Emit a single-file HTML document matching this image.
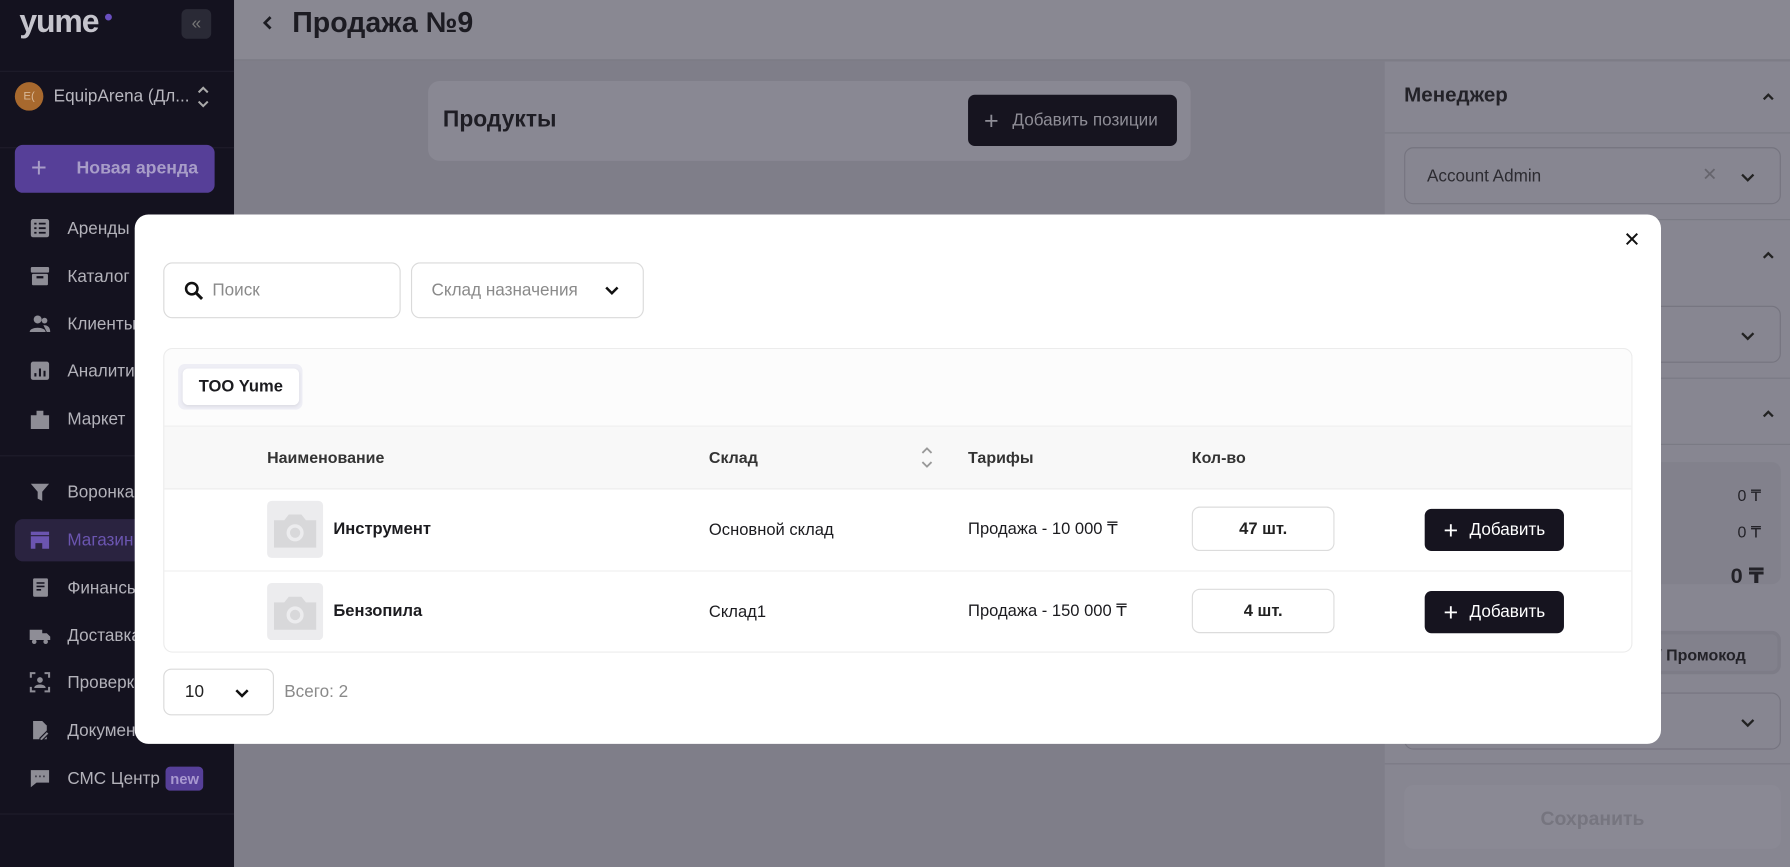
<!DOCTYPE html>
<html><head><meta charset="utf-8">
<style>
*{box-sizing:border-box;margin:0;padding:0}
html,body{width:1790px;height:842px;overflow:hidden;background:#7f7e89}
body{font-family:"Liberation Sans","DejaVu Sans",sans-serif}
#w{position:absolute;left:0;top:0;width:1568px;height:760px;transform:scale(1.14158,1.1409);transform-origin:0 0;background:#7f7e89}
.a{position:absolute}
.sb{left:0;top:0;width:205px;height:760px;background:#14121f}
.mi{position:absolute;left:25px;height:30px;display:flex;align-items:center;color:#b3b2ba;font-size:15px}
.mi svg{width:20px;height:20px;margin-right:14px}
.div{position:absolute;height:1px;background:#1f1d2b;left:0;width:205px}
.rdiv{position:absolute;left:1213px;width:355px;height:1px;background:#7a7984}
.chev{position:absolute;width:16px;height:16px}
.cell{position:absolute;font-size:14.5px;color:#1b1b1f}
.qty{position:absolute;left:1044px;width:125px;height:39px;border:1px solid #dcdcdc;border-radius:7px;display:flex;align-items:center;justify-content:center;font-size:14.5px;font-weight:bold;color:#222}
.btn{position:absolute;left:1248px;width:122px;height:37px;background:#16141f;border-radius:6px;color:#fff;font-size:15px;display:flex;align-items:center;justify-content:center}
.thumb{position:absolute;left:234px;width:49px;height:50px;background:#ececee;border-radius:4px}
</style></head><body><div id="w">
<div class="a" style="left:205px;top:0;width:1363px;height:53px;background:#898892;border-bottom:1px solid #7a7984"></div>
<svg class="a" style="left:228px;top:12px" width="14" height="16" viewBox="0 0 14 16"><path d="M9 3 L4 8 L9 13" stroke="#1c1c22" stroke-width="2.4" fill="none"/></svg>
<div class="a" style="left:256px;top:6px;font-size:25px;font-weight:bold;color:#1c1b22">Продажа №9</div>
<div class="a" style="left:375px;top:71px;width:668px;height:70px;background:#898893;border-radius:10px"></div>
<div class="a" style="left:388px;top:94px;font-size:20px;font-weight:bold;color:#1e1d24">Продукты</div>
<div class="a" style="left:848px;top:83px;width:183px;height:45px;background:#16141f;border-radius:6px;color:#8e8d96;font-size:15px;display:flex;align-items:center;padding-left:14px"><span style="font-size:22px;margin-right:12px;font-weight:300">+</span>Добавить позиции</div>
<div class="a" style="left:1213px;top:54px;width:355px;height:706px;background:#878691"></div>
<div class="a" style="left:1230px;top:73px;font-size:18px;font-weight:bold;color:#232228">Менеджер</div>
<svg class="chev" style="left:1541px;top:77px" viewBox="0 0 16 16"><path d="M4 10 L8 6 L12 10" stroke="#222" stroke-width="2" fill="none"/></svg>
<div class="rdiv" style="top:116px"></div>
<div class="a" style="left:1230px;top:129px;width:330px;height:50px;border:1px solid #75747f;border-radius:8px"></div>
<div class="a" style="left:1250px;top:146px;font-size:15px;color:#2c2b31">Account Admin</div>
<div class="a" style="left:1491px;top:143px;font-size:16px;color:#66656d">✕</div>
<svg class="chev" style="left:1523px;top:147px" viewBox="0 0 16 16"><path d="M3 6 L8 11 L13 6" stroke="#222" stroke-width="2" fill="none"/></svg>
<div class="rdiv" style="top:192px"></div>
<svg class="chev" style="left:1541px;top:216px" viewBox="0 0 16 16"><path d="M4 10 L8 6 L12 10" stroke="#222" stroke-width="2" fill="none"/></svg>
<div class="a" style="left:1230px;top:268px;width:330px;height:50px;border:1px solid #75747f;border-radius:8px"></div>
<svg class="chev" style="left:1523px;top:286px" viewBox="0 0 16 16"><path d="M3 6 L8 11 L13 6" stroke="#222" stroke-width="2" fill="none"/></svg>
<div class="rdiv" style="top:331px"></div>
<svg class="chev" style="left:1541px;top:355px" viewBox="0 0 16 16"><path d="M4 10 L8 6 L12 10" stroke="#222" stroke-width="2" fill="none"/></svg>
<div class="rdiv" style="top:389px"></div>
<div class="a" style="left:1230px;top:405px;width:330px;height:107px;background:#82818c;border-radius:8px"></div>
<div class="a" style="left:1522px;top:426px;font-size:14px;color:#232228">0 ₸</div>
<div class="a" style="left:1522px;top:458px;font-size:14px;color:#232228">0 ₸</div>
<div class="a" style="left:1516px;top:494px;font-size:19px;font-weight:bold;color:#232228">0 ₸</div>
<div class="a" style="left:1230px;top:553px;width:330px;height:38px;background:#82818c;border-radius:8px;border:3px solid #7d7c87"></div>
<div class="a" style="left:1440px;top:566px;font-size:14px;font-weight:bold;color:#232228">а / Промокод</div>
<div class="a" style="left:1230px;top:607px;width:330px;height:50px;border:1px solid #75747f;border-radius:8px"></div>
<svg class="chev" style="left:1523px;top:625px" viewBox="0 0 16 16"><path d="M3 6 L8 11 L13 6" stroke="#222" stroke-width="2" fill="none"/></svg>
<div class="rdiv" style="top:669px"></div>
<div class="a" style="left:1230px;top:688px;width:330px;height:56px;background:#8a8994;border-radius:8px;color:#76757f;font-size:17px;font-weight:bold;text-align:center;line-height:60px">Сохранить</div>
<div class="a sb"></div>
<div class="a" style="left:17px;top:3px;font-size:28px;font-weight:bold;color:#c5c4cc;letter-spacing:-1px">yume</div>
<div class="a" style="left:92px;top:12px;width:6px;height:6px;border-radius:50%;background:#6a4fc0"></div>
<div class="a" style="left:159px;top:8px;width:26px;height:26px;background:#2a2a36;border-radius:5px;color:#777;font-size:15px;text-align:center;line-height:25px">«</div>
<div class="div" style="top:62px"></div>
<div class="a" style="left:13px;top:72px;width:25px;height:25px;border-radius:50%;background:#a8692e;color:#d8b898;font-size:10px;text-align:center;line-height:25px">E(</div>
<div class="a" style="left:47px;top:76px;font-size:15px;color:#b8b7bf">EquipArena (Дл...</div>
<svg class="a" style="left:171px;top:74px" width="14" height="22" viewBox="0 0 14 22"><path d="M3 7 L7 3 L11 7 M3 15 L7 19 L11 15" stroke="#aaa" stroke-width="1.8" fill="none"/></svg>
<div class="div" style="top:129px"></div>
<div class="a" style="left:13px;top:127px;width:175px;height:42px;background:#563f98;border-radius:7px;color:#a89dc8;font-size:15.5px;font-weight:bold;display:flex;align-items:center"><span style="font-size:24px;font-weight:300;margin:0 26px 0 14px">+</span>Новая аренда</div>
<div class="mi" style="top:185px"><svg viewBox="0 0 20 20"><rect x="2" y="2" width="16" height="16" rx="2" fill="#8e8d96"/><path d="M5 6h2M9 6h6M5 10h2M9 10h6M5 14h2M9 14h6" stroke="#14121f" stroke-width="1.6"/></svg>Аренды</div>
<div class="mi" style="top:227px"><svg viewBox="0 0 20 20"><rect x="2" y="2" width="16" height="5" rx="1" fill="#8e8d96"/><rect x="3" y="8" width="14" height="10" rx="1" fill="#8e8d96"/><rect x="7" y="10" width="6" height="2" fill="#14121f"/></svg>Каталог</div>
<div class="mi" style="top:269px"><svg viewBox="0 0 20 20"><circle cx="8" cy="6" r="3.5" fill="#8e8d96"/><circle cx="14" cy="7" r="2.5" fill="#8e8d96"/><path d="M1 17c0-5 14-5 14 0z M13 11c4 0 6 2 6 6h-3z" fill="#8e8d96"/></svg>Клиенты</div>
<div class="mi" style="top:310px"><svg viewBox="0 0 20 20"><rect x="2" y="2" width="16" height="16" rx="2" fill="#8e8d96"/><path d="M6 15v-3M10 15v-7M14 15v-5" stroke="#14121f" stroke-width="1.8"/></svg>Аналитика</div>
<div class="mi" style="top:352px"><svg viewBox="0 0 20 20"><path d="M7 3h6v4h5v12H2V7h5z" fill="#8e8d96"/></svg>Маркет</div>
<div class="div" style="top:399px"></div>
<div class="mi" style="top:416px"><svg viewBox="0 0 20 20"><path d="M2 3h16l-6 7v8l-4-2v-6z" fill="#8e8d96"/></svg>Воронка</div>
<div class="a" style="left:13px;top:455px;width:192px;height:37px;background:#2a2340;border-radius:7px 0 0 7px"></div>
<div class="mi" style="top:458px;color:#6b55b0"><svg viewBox="0 0 20 20"><rect x="2" y="3" width="16" height="3" fill="#6b55b0"/><path d="M2 7h16v11h-6v-5H6v5H2z" fill="#6b55b0"/></svg>Магазин</div>
<div class="mi" style="top:500px"><svg viewBox="0 0 20 20"><rect x="4" y="2" width="13" height="16" rx="1" fill="#8e8d96"/><path d="M7 6h7M7 9h7M7 12h4" stroke="#14121f" stroke-width="1.4"/></svg>Финансы</div>
<div class="mi" style="top:542px"><svg viewBox="0 0 20 20"><path d="M1 5h11v9H1zM12 8h4l3 3v3h-7z" fill="#8e8d96"/><circle cx="5" cy="15.5" r="2" fill="#8e8d96"/><circle cx="15" cy="15.5" r="2" fill="#8e8d96"/></svg>Доставка</div>
<div class="mi" style="top:583px"><svg viewBox="0 0 20 20"><path d="M2 6V2h4M14 2h4v4M18 14v4h-4M6 18H2v-4" stroke="#8e8d96" stroke-width="1.8" fill="none"/><circle cx="10" cy="8" r="2.5" fill="#8e8d96"/><path d="M5 15c0-4 10-4 10 0z" fill="#8e8d96"/></svg>Проверка</div>
<div class="mi" style="top:625px"><svg viewBox="0 0 20 20"><path d="M4 2h8l4 4v12H4z" fill="#8e8d96"/><path d="M10 17l6-6 2 2-6 6h-2z" fill="#8e8d96" stroke="#14121f"/></svg>Документы</div>
<div class="mi" style="top:667px"><svg viewBox="0 0 20 20"><path d="M2 3h16v11H7l-5 4z" fill="#8e8d96"/><path d="M6 8.5h1M9.5 8.5h1M13 8.5h1" stroke="#14121f" stroke-width="1.6"/></svg>СМС Центр<span style="margin-left:5px;background:#563f98;color:#a898d0;font-size:13px;font-weight:bold;padding:3px 4px;border-radius:4px">new</span></div>
<div class="div" style="top:713px"></div>
<div class="a" style="left:118px;top:188px;width:1337px;height:464px;background:#fff;border-radius:12px"></div>
<div class="a" style="left:1422px;top:200px;font-size:18px;font-weight:bold;color:#111">✕</div>
<div class="a" style="left:143px;top:230px;width:208px;height:49px;border:1px solid #dadada;border-radius:8px"></div>
<svg class="a" style="left:160px;top:245px" width="20" height="20" viewBox="0 0 20 20"><circle cx="8" cy="8" r="5" stroke="#111" stroke-width="2.2" fill="none"/><path d="M12 12l5 5" stroke="#111" stroke-width="2.6"/></svg>
<div class="a" style="left:186px;top:246px;font-size:15px;color:#8a8a8a">Поиск</div>
<div class="a" style="left:360px;top:230px;width:204px;height:49px;border:1px solid #dadada;border-radius:8px"></div>
<div class="a" style="left:378px;top:246px;font-size:15px;color:#8a8a8a">Склад назначения</div>
<svg class="chev" style="left:528px;top:246px" viewBox="0 0 16 16"><path d="M3 6 L8 11 L13 6" stroke="#111" stroke-width="2.2" fill="none"/></svg>
<div class="a" style="left:143px;top:305px;width:1287px;height:267px;border:1px solid #ececec;border-radius:8px;overflow:hidden">
 <div style="position:absolute;left:0;top:0;width:100%;height:68px;background:#fcfcfc;border-bottom:1px solid #ededed"></div>
 <div style="position:absolute;left:0;top:68px;width:100%;height:55px;background:#f8f8f8;border-bottom:1px solid #ececec"></div>
 <div style="position:absolute;left:0;top:194px;width:100%;height:1px;background:#efefef"></div>
</div>
<div class="a" style="left:156px;top:319px;width:109px;height:40px;background:#eeeef5;border-radius:6px"></div>
<div class="a" style="left:160px;top:323px;width:102px;height:32px;background:#fff;border-radius:5px;box-shadow:0 1px 3px rgba(0,0,0,.08);font-size:14.5px;font-weight:bold;color:#1b1b1f;text-align:center;line-height:32px">ТОО Yume</div>
<div class="cell" style="left:234px;top:393px;font-weight:bold;color:#333;font-size:14px">Наименование</div>
<div class="cell" style="left:621px;top:393px;font-weight:bold;color:#333;font-size:14px">Склад</div>
<svg class="a" style="left:806px;top:390px" width="12" height="22" viewBox="0 0 12 22"><path d="M2 7l4-4 4 4M2 15l4 4 4-4" stroke="#999" stroke-width="1.6" fill="none"/></svg>
<div class="cell" style="left:848px;top:393px;font-weight:bold;color:#333;font-size:14px">Тарифы</div>
<div class="cell" style="left:1044px;top:393px;font-weight:bold;color:#333;font-size:14px">Кол-во</div>
<div class="thumb" style="top:439px"></div>
<svg class="a" style="left:237px;top:447px" width="43" height="36" viewBox="0 0 43 36"><path d="M3 9h9l4-5h11l4 5h9v24H3z" fill="#d8d8da"/><circle cx="21.5" cy="20" r="6" stroke="#ececee" stroke-width="3" fill="none"/></svg>
<div class="cell" style="left:292px;top:456px;font-weight:bold">Инструмент</div>
<div class="cell" style="left:621px;top:457px">Основной склад</div>
<div class="cell" style="left:848px;top:456px">Продажа - 10 000 ₸</div>
<div class="qty" style="top:444px">47 шт.</div>
<div class="btn" style="top:446px"><span style="font-size:22px;margin-right:10px;font-weight:300">+</span>Добавить</div>
<div class="thumb" style="top:511px"></div>
<svg class="a" style="left:237px;top:519px" width="43" height="36" viewBox="0 0 43 36"><path d="M3 9h9l4-5h11l4 5h9v24H3z" fill="#d8d8da"/><circle cx="21.5" cy="20" r="6" stroke="#ececee" stroke-width="3" fill="none"/></svg>
<div class="cell" style="left:292px;top:528px;font-weight:bold">Бензопила</div>
<div class="cell" style="left:621px;top:529px">Склад1</div>
<div class="cell" style="left:848px;top:528px">Продажа - 150 000 ₸</div>
<div class="qty" style="top:516px">4 шт.</div>
<div class="btn" style="top:518px"><span style="font-size:22px;margin-right:10px;font-weight:300">+</span>Добавить</div>
<div class="a" style="left:143px;top:586px;width:97px;height:41px;border:1px solid #dadada;border-radius:7px"></div>
<div class="a" style="left:162px;top:598px;font-size:15px;color:#222">10</div>
<svg class="chev" style="left:204px;top:599px" viewBox="0 0 16 16"><path d="M3 6 L8 11 L13 6" stroke="#111" stroke-width="2.2" fill="none"/></svg>
<div class="a" style="left:249px;top:598px;font-size:15px;color:#8a8a8a">Всего: 2</div>
</div></body></html>
